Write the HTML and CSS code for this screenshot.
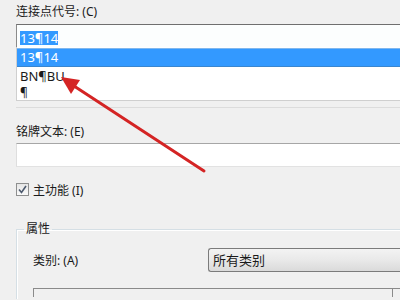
FILE: index.html
```html
<!DOCTYPE html>
<html lang="zh-CN">
<head>
    <meta charset="UTF-8">
    <meta name="viewport" content="width=device-width, initial-scale=1.0">
    <title>连接点</title>
    <link rel="stylesheet" href="styles.css">
</head>
<body>
    <div class="panel">
        <div class="label first">连接点代号: (C)</div>
        <div class="combo-edit"><span class="sel">13¶14</span></div>
        <div class="combo-list">
            <div class="row active">13¶14</div>
            <div class="row">BN¶BU</div>
            <div class="row short">¶</div>
        </div>
        <div class="under-line"></div>

        <div class="label second">铭牌文本: (E)</div>
        <div class="text-input"></div>

        <div class="check-row">
            <span class="check">
                <svg width="11" height="11" viewBox="0 0 11 11"><path d="M2 5.5 L4.5 8.5 L9 2" fill="none" stroke="#4d5a6e" stroke-width="1.6"/></svg>
            </span>
            <span>主功能 (I)</span>
        </div>

        <fieldset class="group">
            <legend>属性</legend>
            <div class="cat-row">
                <span>类别: (A)</span>
                <div class="dropdown">所有类别</div>
            </div>
            <div class="listbox"><div class="col"></div></div>
        </fieldset>
    </div>

    <svg class="arrow" width="400" height="300" viewBox="0 0 400 300">
        <line x1="204" y1="171" x2="74" y2="86" stroke="#d42424" stroke-width="3" stroke-linecap="round"/>
        <polygon points="61,77 80,80 71,94" fill="#d42424"/>
    </svg>
</body>
</html>
```

FILE: styles.css
```css
html {
    overflow: hidden;
}
body {
    margin: 0;
    background: #f0f0f0;
    font-family: "Noto Sans", "Noto Sans CJK SC", sans-serif;
    font-size: 12px;
    color: #1a1a1a;
    overflow: hidden;
    width: 400px;
    height: 300px;
}
.panel {
    padding-left: 16px;
}
.label {
    line-height: 17px;
}
.label.first {
    padding-top: 3px;
    margin-bottom: 4px;
}
.label.second {
    padding-top: 15px;
    margin-bottom: 3px;
}
.combo-edit {
    border-top: 1px solid #6f6f6f;
    border-left: 1px solid #8a8a8a;
    background: #fcfefe;
    padding: 4px 0 0 3px;
    box-sizing: border-box;
    height: 23px;
    font-size: 13px;
}
.sel {
    background: #3399ff;
    color: #fff;
    line-height: 14px;
    display: inline-block;
}
.combo-list {
    border-left: 1px solid #cfcfcf;
    border-bottom: 1px solid #cfcfcf;
    background: #fff;
    padding-top: 1px;
    font-size: 13px;
}
.row {
    height: 18px;
    line-height: 18px;
    padding-left: 3px;
}
.row.active {
    height: 19px;
    line-height: 19px;
    background: #3399ff;
    color: #fff;
    box-shadow: inset 0 1px #7fb7ee, inset 0 -1px #3a86cf;
}
.row.short {
    height: 15px;
    line-height: 15px;
    font-size: 12px;
}
.under-line {
    margin-top: 6px;
    height: 1px;
    background: #dcdcdc;
}
.text-input {
    height: 24px;
    box-sizing: border-box;
    background: #fff;
    border-top: 1px solid #a6a6a6;
    border-left: 1px solid #dedede;
    border-bottom: 1px solid #e2e2e2;
}
.check-row {
    margin-top: 15px;
    display: flex;
    align-items: center;
    gap: 4px;
    height: 15px;
}
.check {
    width: 11px;
    height: 11px;
    border: 1px solid #8e8f8f;
    background: linear-gradient(#e6e6e6, #fafafa);
    display: flex;
    align-items: center;
    justify-content: center;
}
.group {
    margin: 25px 0 0;
    padding: 12px 0 0 16px;
    border: 1px solid #d5dfe5;
    border-right: none;
    border-bottom: none;
    box-shadow: inset 1px 1px #ffffff;
    height: 64px;
}
.group legend {
    margin-left: -9px;
    padding: 0 2px;
    line-height: 14px;
    font-size: 12px;
}
.cat-row {
    display: grid;
    grid-template-columns: 175px 1fr;
    align-items: center;
}
.dropdown {
    height: 24px;
    box-sizing: border-box;
    border: 1px solid #7b7b7b;
    border-right: none;
    border-radius: 3px 0 0 3px;
    background: linear-gradient(#f3f3f3, #e9e9e9 50%, #dadada);
    padding-left: 4px;
    line-height: 22px;
    font-size: 13px;
}
.listbox {
    margin-top: 16px;
    height: 8px;
    border-top: 1px solid #8a8a8a;
    border-left: 1px solid #8a8a8a;
    padding-left: 358px;
}
.col {
    width: 1px;
    height: 100%;
    background: #8a8a8a;
}
.arrow {
    position: absolute;
    left: 0;
    top: 0;
    pointer-events: none;
}
```
